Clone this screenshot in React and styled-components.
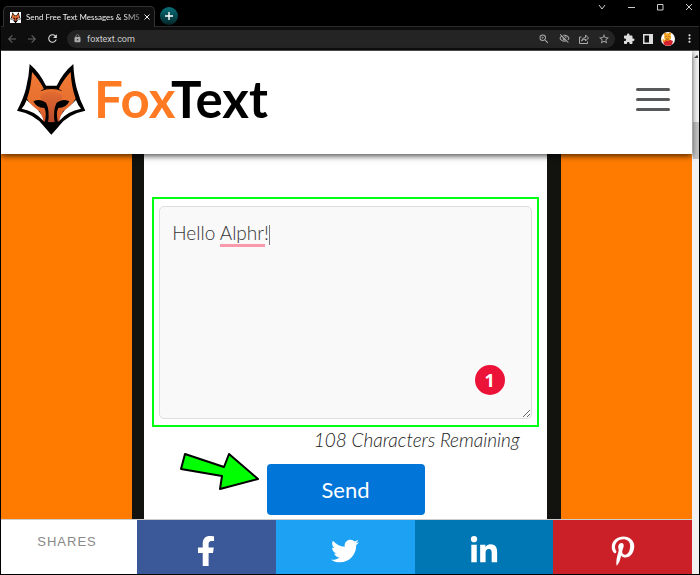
import React, { useState } from "react";
import {
  FaFacebookF,
  FaLinkedinIn,
  FaPinterestP,
  FaTwitter,
} from "react-icons/fa";
import {
  MdArrowBack,
  MdArrowForward,
  MdExtension,
  MdLock,
  MdMoreVert,
  MdOutlineVisibilityOff,
  MdRefresh,
  MdStarBorder,
  MdZoomIn,
} from "react-icons/md";
import styled, { createGlobalStyle } from "styled-components";

const shares = [
  { name: "Facebook", color: "#3b5998", size: 30, icon: FaFacebookF },
  { name: "Twitter", color: "#1da1f3", size: 28, icon: FaTwitter },
  { name: "LinkedIn", color: "#0077b5", size: 30, icon: FaLinkedinIn },
  { name: "Pinterest", color: "#cb2027", size: 30, icon: FaPinterestP },
];

const FoxCheek = () => (
  <>
    <path
      d="M41 120Q58 138 74 150Q88 164 91 182Q65 153 26 146Q36 135 41 120Z"
      fill="#fff"
    />
    <path
      d="M61 124Q82 114 99 128Q111 150 105 188H95Q102 158 94 144Q70 144 61 124Z"
      fill="#000"
    />
  </>
);

const FoxHead = ({ size }) => (
  <svg width={size} height={size} viewBox="6 9 216 216" aria-hidden="true">
    <defs>
      <linearGradient id="fur" x1="0" y1="0" x2="0" y2="1">
        <stop offset="0" stopColor="#f07a35" />
        <stop offset="0.6" stopColor="#e8702f" />
        <stop offset="1" stopColor="#d8552a" />
      </linearGradient>
      <linearGradient id="brow" x1="0" y1="0" x2="0" y2="1">
        <stop offset="0" stopColor="#e36c31" />
        <stop offset="1" stopColor="#b9482a" />
      </linearGradient>
    </defs>
    <path
      d="M50 12Q80 38 99 77H131Q150 38 181 12Q183 55 191 85Q200 120 217 152Q165 162 138 198L115 224L92 198Q65 162 12 152Q32 115 39 85Q48 50 50 12Z"
      fill="#000"
    />
    <path
      d="M57 36Q80 60 93 88Q115 82 137 88Q150 60 173 36Q175 80 188 116Q170 145 150 154L138 186H92L80 154Q55 145 42 116Q55 80 57 36Z"
      fill="url(#fur)"
    />
    <path
      d="M84 104Q115 84 146 104Q152 116 138 122Q128 132 127 188H103Q102 132 92 122Q78 116 84 104Z"
      fill="url(#brow)"
    />
    <FoxCheek />
    <g transform="translate(230 0) scale(-1 1)">
      <FoxCheek />
    </g>
    <path d="M82 94Q92 84 115 84Q138 84 148 94Q132 87 115 87Q98 87 82 94Z" />
    <path d="M90 184Q115 190 140 184L137 198L115 223L93 198Z" fill="#000" />
  </svg>
);

const App = () => {
  const [message, setMessage] = useState("Hello Alphr!");
  const parts = message.split(/(Alphr)/);

  return (
    <>
      <GlobalStyle />
      <Browser>
        <TabStrip>
          <Tab>
            <Favicon>
              <FoxHead size={11} />
            </Favicon>
            <TabTitle>Send Free Text Messages &amp; SMS</TabTitle>
            <TabClose aria-label="Close tab">
              <svg width="6" height="6" viewBox="0 0 6 6">
                <path d="M0.5 0.5L5.5 5.5M5.5 0.5L0.5 5.5" stroke="#eee" />
              </svg>
            </TabClose>
          </Tab>
          <NewTab aria-label="New tab">
            <svg width="8" height="8" viewBox="0 0 8 8">
              <path d="M4 0V8M0 4H8" stroke="#fff" strokeWidth="1.4" />
            </svg>
          </NewTab>
          <WindowButtons>
            <button aria-label="Search tabs">
              <svg width="8" height="8" viewBox="0 0 8 8">
                <path d="M1 2L4 6L7 2" />
              </svg>
            </button>
            <button aria-label="Minimize">
              <svg width="8" height="8" viewBox="0 0 8 8">
                <path d="M1 4.5H8" />
              </svg>
            </button>
            <button aria-label="Maximize">
              <svg width="8" height="8" viewBox="0 0 8 8">
                <path d="M1.5 1.5H7V7H1.5Z" />
              </svg>
            </button>
            <button aria-label="Close">
              <svg width="8" height="8" viewBox="0 0 8 8">
                <path d="M1 1L7 7M7 1L1 7" />
              </svg>
            </button>
          </WindowButtons>
        </TabStrip>

        <Toolbar>
          <ToolButton aria-label="Back" $dim>
            <MdArrowBack size={12} />
          </ToolButton>
          <ToolButton aria-label="Forward" $dim>
            <MdArrowForward size={12} />
          </ToolButton>
          <ToolButton aria-label="Reload">
            <MdRefresh size={13} />
          </ToolButton>
          <AddressBar>
            <MdLock size={9} />
            <AddressInput aria-label="Address" defaultValue="foxtext.com" />
            <AddressActions>
              <ToolButton aria-label="Zoom">
                <MdZoomIn size={12} />
              </ToolButton>
              <ToolButton aria-label="Cookies blocked">
                <MdOutlineVisibilityOff size={11} />
              </ToolButton>
              <ToolButton aria-label="Share">
                <svg
                  width="10"
                  height="10"
                  viewBox="0 0 10 10"
                  fill="none"
                  stroke="currentColor"
                >
                  <path d="M2.5 3H0.5V9.5H8.5V7.5" />
                  <path d="M2.5 7Q3 3.5 6.5 3.5V1L9.5 4L6.5 7V5.2Q4 5 2.5 7Z" />
                </svg>
              </ToolButton>
              <ToolButton aria-label="Bookmark">
                <MdStarBorder size={12} />
              </ToolButton>
            </AddressActions>
          </AddressBar>
          <ToolButton aria-label="Extensions">
            <MdExtension size={12} />
          </ToolButton>
          <ToolButton aria-label="Side panel">
            <svg width="10" height="10" viewBox="0 0 10 10">
              <path
                d="M0 0H10V10H0ZM1.5 1.5V8.5H6V1.5Z"
                fill="currentColor"
                fillRule="evenodd"
              />
            </svg>
          </ToolButton>
          <ToolButton aria-label="Profile">
            <svg width="14" height="14" viewBox="0 0 14 14">
              <circle cx="7" cy="7" r="7" fill="#fff" />
              <path d="M2 9Q7 6 12 9L11 12.5Q7 15 3 12.5Z" fill="#d3202a" />
              <path d="M3 10L1 8L2 7L5 9Z" fill="#f4a51f" />
              <circle cx="4" cy="2" r="1.2" fill="#e9951c" />
              <circle cx="9" cy="1.6" r="1.2" fill="#e9951c" />
              <ellipse cx="6.6" cy="5" rx="3.4" ry="3.8" fill="#f4a51f" />
              <path
                d="M5 4V5M8 4V5M5 6.8Q6.6 8 8 6.6"
                stroke="#7a3c12"
                strokeWidth="0.7"
                fill="none"
              />
            </svg>
          </ToolButton>
          <ToolButton aria-label="Menu">
            <MdMoreVert size={13} />
          </ToolButton>
        </Toolbar>

        <Viewport>
          <Page>
            <Header>
              <Brand href="#">
                <FoxHead size={72} />
                <span>
                  <b>Fox</b>Text
                </span>
              </Brand>
              <MenuButton aria-label="Open menu">
                <i />
                <i />
                <i />
              </MenuButton>
            </Header>

            <Stage>
              <Phone>
                <Highlight>
                  <MessageField>
                    <MessageBox
                      aria-label="Message"
                      spellCheck={false}
                      value={message}
                      onChange={(e) => setMessage(e.target.value)}
                    />
                    <SpellMarks aria-hidden="true">
                      {parts.map((part, ind) =>
                        part === "Alphr" ? <u key={ind}>{part}</u> : part
                      )}
                      <Caret />
                    </SpellMarks>
                    <Step>1</Step>
                  </MessageField>
                </Highlight>
                <Remaining>
                  {120 - message.length} Characters Remaining
                </Remaining>
                <SendButton>Send</SendButton>
                <Pointer viewBox="0 0 82 42" aria-hidden="true">
                  <path d="M7 3L46 16L51 3L80 28L42 38L44 25L3 18Z" />
                </Pointer>
              </Phone>
            </Stage>

            <ShareBar>
              <ShareLabel>SHARES</ShareLabel>
              {shares.map(({ name, color, size, icon: Icon }) => (
                <ShareLink key={name} href="#" aria-label={name} $color={color}>
                  <Icon size={size} />
                </ShareLink>
              ))}
            </ShareBar>
          </Page>
          <Scrollbar>
            <svg width="6" height="4" viewBox="0 0 6 4">
              <path d="M2 3L5 0L6 1V3Z" fill="#444" />
            </svg>
            <Thumb />
          </Scrollbar>
        </Viewport>
      </Browser>
    </>
  );
};

const GlobalStyle = createGlobalStyle`
  * {
    box-sizing: border-box;
  }

  body {
    margin: 0;
    font-family: Lato, "Open Sans", sans-serif;
  }

  button {
    margin: 0;
    padding: 0;
    border: 0;
    background: none;
    color: inherit;
    font: inherit;
  }
`;

const Browser = styled.div`
  display: flex;
  flex-direction: column;
  min-height: 100vh;
  padding: 0 1px 1px;
  background: #000;
`;

/* tab strip */
const TabStrip = styled.div`
  display: flex;
  height: 27px;
  padding-left: 2px;
  border-bottom: 1px solid #2b2b2b;
`;

const Tab = styled.div`
  display: flex;
  align-items: center;
  width: 152px;
  height: 21px;
  margin-top: 6px;
  padding: 0 7px 0 6px;
  border: 1px solid #333;
  border-bottom: 0;
  border-radius: 5px 5px 0 0;
  background: #0e0e0e;
`;

const Favicon = styled.span`
  display: flex;
  background: #fff;
`;

const TabTitle = styled.span`
  flex: 1;
  margin-left: 5px;
  color: #eee;
  font: 8px Lato, sans-serif;
  white-space: nowrap;
  mask-image: linear-gradient(90deg, #000 85%, #0006);
`;

const TabClose = styled.button`
  display: flex;
  margin-left: 4px;
`;

const NewTab = styled.button`
  display: flex;
  align-items: center;
  justify-content: center;
  width: 18px;
  height: 18px;
  margin: 7px 0 0 5px;
  border-radius: 50%;
  background: linear-gradient(#087078, #04262a);
`;

const WindowButtons = styled.div`
  display: flex;
  gap: 21px;
  height: 14px;
  margin-left: auto;
  padding-right: 6px;

  svg {
    display: block;
    fill: none;
    stroke: #ccc;
  }
`;

/* toolbar */
const Toolbar = styled.div`
  display: flex;
  align-items: center;
  gap: 8px;
  height: 24px;
  padding: 0 3px 0 5px;
  border-bottom: 1px solid #555;
  background: #0e0e0e;
`;

const ToolButton = styled.button`
  display: flex;
  color: ${({ $dim }) => ($dim ? "#666" : "#ddd")};
`;

const AddressBar = styled.div`
  display: flex;
  flex: 1;
  align-items: center;
  gap: 5px;
  height: 18px;
  padding: 0 5px 0 6px;
  border-radius: 9px;
  background: #242424;
  color: #aaa;
`;

const AddressInput = styled.input`
  flex: 1;
  min-width: 0;
  padding: 0;
  border: 0;
  background: none;
  color: #ccc;
  font: 9px Roboto, sans-serif;
`;

const AddressActions = styled.div`
  display: flex;
  align-items: center;
  gap: 9px;

  ${ToolButton} {
    color: #aaa;
  }
`;

/* page */
const Viewport = styled.div`
  display: flex;
  flex: 1;
`;

const Page = styled.main`
  display: flex;
  flex: 1;
  flex-direction: column;
  min-width: 0;
  background: #fff;
`;

const Scrollbar = styled.div`
  width: 7px;
  padding-top: 4px;
  background: #f1f1f1;

  svg {
    display: block;
  }
`;

const Thumb = styled.div`
  height: 37px;
  margin: 63px 0 0 1px;
  background: #c1c1c1;
`;

const Header = styled.header`
  z-index: 1;
  display: flex;
  align-items: center;
  justify-content: space-between;
  height: 103px;
  padding: 0 22px 7px 14px;
  background: #fff;
  box-shadow: 0 2px 6px rgba(0, 0, 0, 0.7);
`;

const Brand = styled.a`
  display: flex;
  align-items: center;
  gap: 7px;
  color: #000;
  font-size: 51px;
  font-weight: 700;
  line-height: 60px;
  text-decoration: none;

  b {
    color: #ff7a22;
    font-weight: 700;
  }
`;

const MenuButton = styled.button`
  display: flex;
  flex-direction: column;
  gap: 7px;

  i {
    width: 34px;
    height: 3px;
    border-radius: 2px;
    background: #58595b;
  }
`;

const Stage = styled.section`
  display: flex;
  flex: 1;
  justify-content: center;
  background: #ff7b00;
`;

const Phone = styled.div`
  position: relative;
  display: flex;
  flex-direction: column;
  width: 62%;
  padding: 43px 8px 4px;
  border: solid #12120f;
  border-width: 0 14px 0 12px;
  background: #fff;
`;

const Highlight = styled.div`
  padding: 7px 5px 6px;
  border: 2px solid #0f1;
`;

const MessageField = styled.div`
  position: relative;
  display: flex;
`;

const MessageBox = styled.textarea`
  flex: 1;
  min-width: 0;
  height: 213px;
  padding: 12px;
  border: 1px solid #ddd;
  border-radius: 5px;
  outline: 0;
  background: #f9f9f9;
  color: #333;
  font: 300 19px/28px Lato, sans-serif;
`;

/* same metrics as the textarea, drawn over it */
const SpellMarks = styled.div`
  position: absolute;
  inset: 0;
  padding: 13px;
  color: transparent;
  font: 300 19px/28px Lato, sans-serif;
  white-space: pre-wrap;
  pointer-events: none;

  u {
    display: inline-block;
    height: 28px;
    border-bottom: 3px solid #f89aac;
    text-decoration: none;
  }
`;

const Caret = styled.span`
  display: inline-block;
  width: 1px;
  height: 20px;
  background: #777;
  vertical-align: middle;
`;

const Step = styled.span`
  position: absolute;
  right: 27px;
  bottom: 24px;
  width: 30px;
  height: 30px;
  border-radius: 50%;
  background: #ec1338;
  color: #fff;
  font: 700 18px/30px "Noto Sans", sans-serif;
  text-align: center;
`;

const Remaining = styled.p`
  margin: 0;
  padding-right: 19px;
  color: #222;
  font-size: 19px;
  font-style: italic;
  font-weight: 300;
  line-height: 26px;
  text-align: right;
`;

const SendButton = styled.button`
  align-self: center;
  width: 158px;
  height: 51px;
  margin-top: 11px;
  border-radius: 4px;
  background: #0275d8;
  color: #fff;
  font-size: 22px;
`;

const Pointer = styled.svg`
  position: absolute;
  left: 34px;
  bottom: 26px;
  width: 82px;
  height: 42px;
  fill: #0f0;
  stroke: #000;
  stroke-width: 2px;
  stroke-linejoin: round;
`;

const ShareBar = styled.footer`
  display: flex;
  height: 55px;
  border-top: 1px solid #ccc;
`;

const ShareLabel = styled.div`
  width: 136px;
  padding: 14px 4px 0 0;
  color: #888;
  font: 13px/16px "Liberation Sans", sans-serif;
  letter-spacing: 1px;
  text-align: center;
`;

const ShareLink = styled.a`
  display: flex;
  flex: 1;
  align-items: center;
  justify-content: center;
  padding-top: 7px;
  background: ${({ $color }) => $color};
  color: #fff;
`;

export default App;
